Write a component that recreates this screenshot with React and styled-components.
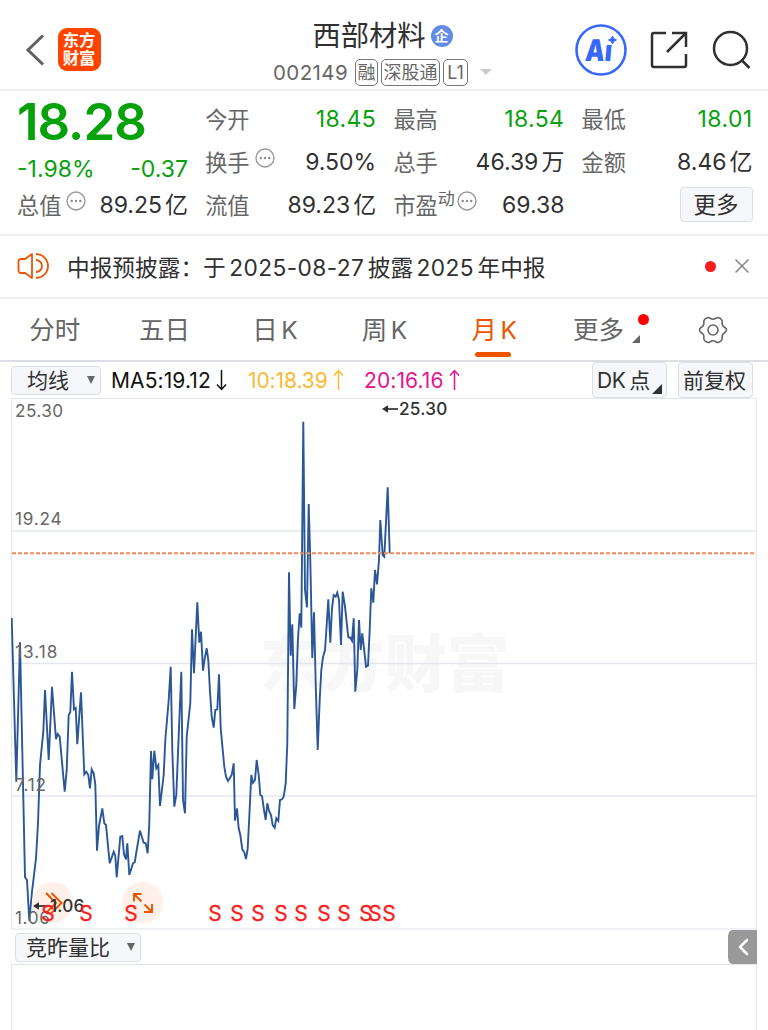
import React from "react";
import styled, {createGlobalStyle} from "styled-components";

const GlobalStyle = createGlobalStyle`
  * {
    box-sizing: border-box;
  }

  body {
    margin: 0;
    background: #fff;
    overflow: hidden;
    font-family: Inter, "Noto Sans CJK SC", sans-serif;
    color: #303030;
  }

  button {
    font-family: inherit;
    color: inherit;
    padding: 0;
  }
`;

const Page = styled.div`
  width: 768px;
  height: 1030px;
  overflow: hidden;
  display: flex;
  flex-direction: column;
  white-space: nowrap;
`;

const Header = styled.header`
  height: 91px;
  flex: none;
  border-bottom: 2px solid #efefef;
  display: grid;
  grid-template-columns: 230px 1fr 230px;
  padding: 0 17px 0 24px;
`;

const HeaderLeft = styled.div`
  display: flex;
  align-items: center;
  gap: 11.5px;
  padding-top: 10px;
`;

const Logo = styled.div`
  width: 43px;
  height: 43px;
  border-radius: 9px;
  background: #ff4400;
  color: #fff;
  font-size: 16.3px;
  line-height: 18px;
  font-weight: 700;
  text-align: center;
  padding-top: 3px;
`;

const HeaderTitle = styled.div`
  display: flex;
  flex-direction: column;
  align-items: center;
  padding: 16px 10px 0 0;
`;

const StockName = styled.div`
  display: flex;
  align-items: center;
  gap: 5px;
  height: 40px;
  font-size: 28.3px;
  line-height: 40px;
`;

const CompanyBadge = styled.span`
  width: 22px;
  height: 22px;
  border-radius: 50%;
  background: #628ce6;
  color: #fff;
  font-size: 14px;
  font-weight: 700;
  line-height: 21px;
  text-align: center;
`;

const CodeRow = styled.div`
  display: flex;
  align-items: center;
  gap: 3px;
  height: 32px;
  font-size: 20.5px;
  color: #666;
`;

const StockCode = styled.span`
  letter-spacing: 0.4px;
  margin-right: 4px;
`;

const Tag = styled.span`
  height: 27px;
  width: ${(props) => props.$width}px;
  border: 1px solid #777;
  border-radius: 5px;
  font-size: 18px;
  line-height: 25px;
  display: flex;
  justify-content: center;
`;

const Caret = styled.span`
  border: ${(props) => props.$size}px solid transparent;
  border-top: ${(props) => props.$height}px solid ${(props) => props.$color};
  border-bottom: 0;
  margin-left: ${(props) => props.$gap || 0}px;
`;

const HeaderRight = styled.div`
  display: flex;
  align-items: center;
  justify-content: flex-end;
  padding-top: 10px;
  gap: 23px;
`;

const AiMark = styled.text`
  font-family: Inter, sans-serif;
  font-size: 30px;
  font-weight: 900;
  fill: #3768fa;
`;

const Quote = styled.section`
  height: 145px;
  flex: none;
  border-bottom: 2px solid #efefef;
  padding: 7px 15px 0 17px;
  display: grid;
  grid-template-columns: repeat(4, 171px);
  grid-template-rows: repeat(3, 43px);
  column-gap: 17.2px;
`;

const PriceBlock = styled.div`
  grid-row: span 2;
  color: #07a10b;
`;

const Price = styled.div`
  font-size: 51px;
  line-height: 48px;
  font-weight: 600;
  letter-spacing: -1px;
`;

const Change = styled.div`
  display: flex;
  justify-content: space-between;
  font-size: 23px;
  line-height: 30px;
  margin-top: 8px;
`;

const Cell = styled.div`
  display: flex;
  align-items: center;
  justify-content: space-between;
  font-size: 23px;
  line-height: 43px;
`;

const Label = styled.span`
  display: flex;
  align-items: center;
  color: #666;
  font-size: 22.2px;

  svg {
    margin: -10px 0 0 5px;
  }

  sup {
    font-size: 17px;
    line-height: 17px;
    margin-top: -13px;
  }

  sup + svg {
    margin-left: 2px;
  }
`;

const Value = styled.span`
  color: ${(props) => (props.$down ? "#07a10b" : "#303030")};
  letter-spacing: ${(props) => (props.$down ? 0.4 : 0)}px;
`;

const Unit = styled.span`
  margin-left: 3px;
  font-size: 23px;
`;

const MoreButton = styled.button`
  width: 73px;
  height: 35px;
  margin: -3px 0 0 auto;
  border: 1px solid #dcdfe4;
  border-radius: 4px;
  background: #f6f7fa;
  font-size: 22.5px;
  line-height: 33px;
`;

const Notice = styled.section`
  height: 63px;
  flex: none;
  border-bottom: 2px solid #efefef;
  display: flex;
  align-items: center;
  padding: 0 18px 1px 17px;
  font-size: 22.7px;
`;

const NoticeText = styled.span`
  margin-left: 18px;
  flex: 1;

  b {
    font-weight: 400;
    letter-spacing: 0.4px;
    margin: 0 3.5px;
  }
`;

const Dot = styled.span`
  width: 11px;
  height: 11px;
  border-radius: 50%;
  background: #fa1d1d;
`;

const CloseIcon = styled.svg`
  margin-left: 18px;
`;

const Tabs = styled.nav`
  height: 63px;
  flex: none;
  border-bottom: 2px solid #dcdee4;
  display: grid;
  grid-template-columns: repeat(5, 109.6px) 101px 1fr;
`;

const Tab = styled.div`
  display: flex;
  flex-direction: column;
  align-items: center;
  justify-content: flex-end;
  position: relative;
  font-size: 25.5px;
  line-height: 36px;
  padding-bottom: 12px;
  color: ${(props) => (props.$active ? "#ee5400" : "#666")};

  &::after {
    content: "";
    display: ${(props) => (props.$active ? "block" : "none")};
    position: absolute;
    bottom: 3px;
    width: 36px;
    height: 5px;
    border-radius: 3px;
    background: #ee5400;
  }
`;

const TabLabel = styled.span`
  b {
    font-size: 24.5px;
    font-weight: 400;
    margin-left: 3.5px;
    margin-right: -2px;
  }
`;

const TabDot = styled(Dot)`
  position: absolute;
  top: 15px;
  right: 0;
  background: #ff0000;
`;

const Corner = styled.span`
  position: absolute;
  right: ${(props) => props.$right}px;
  bottom: ${(props) => props.$bottom}px;
  border-left: ${(props) => props.$size}px solid transparent;
  border-bottom: ${(props) => props.$size}px solid ${(props) => props.$color};
`;

const Settings = styled.div`
  display: flex;
  align-items: center;
  padding-left: 49px;
`;

const Toolbar = styled.div`
  height: 36px;
  flex: none;
  display: flex;
  align-items: center;
  padding: 0 15px 0 11px;
  font-size: 21px;
`;

const Picker = styled.button`
  display: flex;
  align-items: center;
  justify-content: space-between;
  flex: none;
  position: relative;
  width: ${(props) => props.$width}px;
  height: ${(props) => props.$height}px;
  padding: ${(props) => props.$pad || "0 4px"};
  margin-left: ${(props) => props.$gap || 0}px;
  border: 1px solid #dcdfe4;
  border-radius: 4px;
  background: #f6f7fa;
  font-size: 21px;
  line-height: 27px;

  b {
    font-weight: 400;
    letter-spacing: -0.5px;
    margin-right: 4px;
  }
`;

const Averages = styled.div`
  display: flex;
  flex: 1;
  margin-left: 10px;
`;

const Average = styled.span`
  display: flex;
  align-items: center;
  gap: 5px;
  width: ${(props) => props.$width}px;
  color: ${(props) => props.$color};
  letter-spacing: ${(props) => props.$spacing}px;
`;

const Chart = styled.section`
  position: relative;
  height: 532px;
  flex: none;
  margin: 0 11px;
  border: 1px solid #e3e5ec;
  border-bottom: 2px solid #f0f1f4;
`;

const Watermark = styled.div`
  position: absolute;
  left: 248px;
  top: 221px;
  font-size: 62.3px;
  line-height: 90px;
  font-weight: 900;
  color: #f7f7f7;
`;

const Plot = styled.svg`
  position: absolute;
  left: -1px;
  top: -1px;
`;

const AxisLabel = styled.span`
  position: absolute;
  left: 3px;
  top: ${(props) => props.$top}px;
  font-size: 17.2px;
  line-height: 20px;
  letter-spacing: ${(props) => props.$spacing}px;
  color: #666;
`;

const Extreme = styled.span`
  position: absolute;
  left: ${(props) => props.$left}px;
  top: ${(props) => props.$top}px;
  display: flex;
  align-items: center;
  font-size: 17.2px;
  line-height: 20px;
  font-weight: 500;
  letter-spacing: 0.2px;
`;

const RoundButton = styled.span`
  position: absolute;
  left: ${(props) => props.$left}px;
  top: 483px;
  width: 41px;
  height: 41px;
  border-radius: 50%;
  background: #fff1ea;
  display: flex;
  align-items: center;
  justify-content: center;
`;

const Signal = styled.span`
  position: absolute;
  top: 503px;
  left: ${(props) => props.$left}px;
  width: 20px;
  text-align: center;
  font-size: 21px;
  line-height: 24px;
  color: #fa1d1d;
  -webkit-text-stroke: 0.3px #fa1d1d;
`;

const IndicatorBar = styled.div`
  height: 34px;
  flex: none;
  display: flex;
  align-items: center;
  justify-content: space-between;
  margin: 0 11px;
  padding-left: 4px;
`;

const Collapse = styled.button`
  width: 29px;
  height: 36px;
  border: 0;
  border-radius: 7px 0 0 7px;
  background: #999;
  display: flex;
  align-items: center;
  justify-content: center;
`;

const SubChart = styled.section`
  flex: 1;
  margin: 0 11px;
  border: 1px solid #e3e5ec;
  border-bottom: 0;
`;

const quotes = [
    {label: "今开", value: "18.45", down: true},
    {label: "最高", value: "18.54", down: true},
    {label: "最低", value: "18.01", down: true},
    {label: "换手", value: "9.50%", info: true},
    {label: "总手", value: "46.39", unit: "万"},
    {label: "金额", value: "8.46", unit: "亿"},
    {label: "总值", value: "89.25", unit: "亿", info: true},
    {label: "流值", value: "89.23", unit: "亿"},
    {label: "市盈", sup: "动", value: "69.38", info: true},
];

const tabs = [
    {name: "分时"},
    {name: "五日"},
    {name: "日", k: true},
    {name: "周", k: true},
    {name: "月", k: true, active: true},
];

const axis = [
    {text: "25.30", top: 2, spacing: 0.4},
    {text: "19.24", top: 110, spacing: 0.8},
    {text: "13.18", top: 243, spacing: 1},
    {text: "7.12", top: 376, spacing: 0.8},
    {text: "1.06", top: 509, spacing: 0.6},
];

const signals = [48, 86, 131, 215, 237, 258, 281, 301, 324, 344, 366, 375, 389];

const prices = [
    "11.7,618 16.3,781.7 20,642.3 25,877.3 27,880 29.3,920.7 32,891.7 36,858.3 38,823.3 40,765",
    "43.3,731.7 45,690 48.7,760 52,686.7 56,739.3 57.7,734 59.7,736.7 64.7,791.7 66.7,770 68.7,715",
    "70.3,712 72,671.7 74,709.3 75.7,708 77.3,744.3 81,692.3 84.3,774.3 86.3,771.7 88.3,775 90,788.3",
    "91.7,769.3 93.7,773.3 95.3,784.3 97,850.7 99,826 102.3,808.3 104.3,823.3 106,825 109.7,863.3",
    "113.7,851.7 115.3,855.7 116.7,877.3 120.3,836.7 122.3,836 124,854.3 126,859.3 127.3,843.3 129.3,875",
    "133,863.3 134.7,862.3 136.7,850 140,830.7 143.7,842.7 145.7,843.3 147.7,853.3 149.3,823.3 151,751",
    "152.3,779.3 154.3,750.7 156.3,768.3 158.3,765 160,806 163.7,775 165.3,740 168.7,700 170.7,666.7",
    "172.3,750 174.3,806.7 176.3,795 181.3,671.7 183,800 185,813.3 186.7,736.7 190.3,703.3 192,629.3",
    "194,673.3 197.3,602.3 199.3,642.7 201,631.7 203,670.7 204.7,658.3 206.7,648.3 208.3,660 210,691.7",
    "211.7,716.7 213.7,727.7 215.3,710 217.3,709.3 219,674.3 220.7,728.3 224.3,766.7 226,776.7 228,781",
    "230,777.7 231.7,775 233.7,763.3 235,820.7 237,808.3 238.7,828.3 240.3,835 242.3,849.3 244.3,852.3",
    "246,859 247.7,848.3 249.3,816.7 251.3,775 253,782.7 255,780 256.7,760 258.7,775 260.3,795 262,796",
    "264,810 265.7,820 267.3,803.3 269,810.7 271,815 272.7,825 274.7,827.7 276.3,818.3 278.3,821 280,800",
    "282,799.3 283.7,796.7 285.7,783.3 287.3,743.3 289,572.3 290.7,655.7 292.3,624.3 294.3,709 296.3,685",
    "298,638.3 299.7,613.3 301.3,627.7 303.3,421.7 305,590 307,607.3 308.7,504 310.3,560 312.3,658",
    "314,612.3 315.7,683.3 317.7,750 319.7,700 321.3,670 323,657.3 325,650 326.7,625 328.3,599.3",
    "330.3,642.7 332,608.3 333.7,595 335.7,596.7 337.3,592.7 339,600 341,645 342.7,591.7 345,606.7",
    "348.3,637.3 350.3,637.7 352,640.7 353.7,618.3 355.3,691.7 357.3,670 359,620 360.7,650 362.3,633.3",
    "364,648.3 366,666.7 368,665.7 369.7,630 371.3,588.3 373.3,602.7 375,570 377,584.3 379,560 380.3,520",
    "382.7,555 384.3,556.7 387.7,487.3 389.7,553.3",
].join(" ");

const InfoIcon = () => (
    <svg width="20" height="20" viewBox="0 0 20 20" fill="none">
        <circle cx="10" cy="10" r="9" stroke="#999" strokeWidth="1.4"/>
        <g fill="#888">
            <circle cx="5.7" cy="10" r="1.2"/>
            <circle cx="10" cy="10" r="1.2"/>
            <circle cx="14.3" cy="10" r="1.2"/>
        </g>
    </svg>
);

const TrendArrow = ({down}) => (
    <svg width="11" height="22" viewBox="0 0 11 22" fill="none" stroke="currentColor" strokeWidth="1.5">
        <path d={down ? "M5.5 1v19M1 15.5l4.5 5 4.5-5" : "M5.5 21V2M1 6.5l4.5-5 4.5 5"}/>
    </svg>
);

const LeftArrow = () => (
    <svg width="17" height="10" viewBox="0 0 17 10">
        <path d="M4 5h12" stroke="#303030" strokeWidth="1.7"/>
        <path d="M0 5l6-3.8v7.6z" fill="#303030"/>
    </svg>
);

const QuoteCell = ({item}) => (
    <Cell>
        <Label>
            {item.label}
            {item.sup ? <sup>{item.sup}</sup> : null}
            {item.info ? <InfoIcon/> : null}
        </Label>
        <Value $down={item.down}>
            {item.value}
            {item.unit ? <Unit>{item.unit}</Unit> : null}
        </Value>
    </Cell>
);

const StockHeader = () => (
    <Header>
        <HeaderLeft>
            <svg width="22" height="32" viewBox="0 0 22 32" fill="none">
                <path d="M19 1.5L4 16l15 14.500" stroke="#606060" strokeWidth="3"/>
            </svg>
            <Logo>东方<br/>财富</Logo>
        </HeaderLeft>
        <HeaderTitle>
            <StockName>西部材料<CompanyBadge>企</CompanyBadge></StockName>
            <CodeRow>
                <StockCode>002149</StockCode>
                <Tag $width={23}>融</Tag>
                <Tag $width={59}>深股通</Tag>
                <Tag $width={25}>L1</Tag>
                <Caret $size={6} $height={6} $color="#ccc" $gap={9}/>
            </CodeRow>
        </HeaderTitle>
        <HeaderRight>
            <svg width="52" height="52" viewBox="0 0 52 52" fill="none">
                <circle cx="26" cy="26" r="24.5" stroke="#3768fa" strokeWidth="2.600"/>
                <AiMark transform="translate(9.500 36.500) skewX(-5) scale(0.820 1)">Ai</AiMark>
                {/* the dot of the i is a four-pointed star */}
                <path d="M31 10h12v11H31z" fill="#fff"/>
                <path
                    d="M37.500 12l1.300 2.700 2.700 1.300-2.700 1.300-1.300 2.700-1.300-2.700-2.700-1.300 2.700-1.300z"
                    fill="#3768fa"
                    stroke="#3768fa"
                    strokeLinejoin="round"
                />
            </svg>
            <svg width="38" height="38" viewBox="0 0 38 38" fill="none" stroke="#303030" strokeWidth="2.500">
                <path d="M16 2H4a2 2 0 0 0-2 2v30a2 2 0 0 0 2 2h30a2 2 0 0 0 2-2V23M22 2h14v14M36 2L17 21"/>
            </svg>
            <svg width="40" height="40" viewBox="0 0 40 40" fill="none" stroke="#303030" strokeWidth="2.500">
                <circle cx="19.5" cy="18.500" r="16.500"/>
                <path d="M30.5 30l8 8"/>
            </svg>
        </HeaderRight>
    </Header>
);

const PriceChart = () => (
    <Chart>
        <Watermark>东方财富</Watermark>
        <Plot width="746" height="532" viewBox="11 398 746 532" fill="none">
            <path d="M12 531h744M12 663.500h744M12 796h744" stroke="#e4e8ee" strokeWidth="1.600"/>
            <polyline points={prices} stroke="#2b5797" strokeWidth="1.900" strokeLinejoin="miter"/>
            <path d="M12 553.300h744" stroke="#ee8a5b" strokeWidth="1.900" strokeDasharray="4 2"/>
        </Plot>
        <RoundButton $left={20}>
            <svg width="20" height="22" viewBox="0 0 20 22" fill="none" stroke="#ee5400" strokeWidth="2">
                <path d="M3 1l10 10-10 10M8.500 1l10 10-10 10"/>
            </svg>
        </RoundButton>
        <RoundButton $left={110}>
            <svg width="24" height="24" viewBox="0 0 24 24" fill="none" stroke="#ee5400" strokeWidth="1.900">
                <path d="M10.500 3H3v7.500M3 3l7.500 7.500M13 21h8v-8M21 21l-7.500-7.500"/>
            </svg>
        </RoundButton>
        {axis.map((item) => (
            <AxisLabel key={item.text} $top={item.top} $spacing={item.spacing}>{item.text}</AxisLabel>
        ))}
        <Extreme $left={370} $top={0}><LeftArrow/>25.30</Extreme>
        <Extreme $left={21} $top={497}><LeftArrow/>1.06</Extreme>
        {signals.map((x) => (
            <Signal key={x} $left={x - 22}>S</Signal>
        ))}
    </Chart>
);

const App = () => (
    <>
        <GlobalStyle/>
        <Page>
            <StockHeader/>
            <Quote>
                <PriceBlock>
                    <Price>18.28</Price>
                    <Change><span>-1.98%</span><span>-0.37</span></Change>
                </PriceBlock>
                {quotes.map((item) => <QuoteCell key={item.label} item={item}/>)}
                <Cell><MoreButton>更多</MoreButton></Cell>
            </Quote>
            <Notice>
                <svg width="32" height="28" viewBox="0 0 32 28" fill="none" stroke="#ee5400" strokeWidth="1.800">
                    <path d="M15 2v24l-7-5H4a2.500 2.500 0 0 1-2.500-2.500v-9A2.500 2.500 0 0 1 4 7h4z" strokeLinejoin="round"/>
                    <path d="M19 8a6 6 0 0 1 0 12M19 2a12 12 0 0 1 0 24"/>
                </svg>
                <NoticeText>
                    中报预披露：于<b>2025-08-27</b>披露<b>2025</b>年中报
                </NoticeText>
                <Dot/>
                <CloseIcon width="16" height="16" viewBox="0 0 16 16" stroke="#888" strokeWidth="1.600">
                    <path d="M1.500 1.500l13 13M14.500 1.500l-13 13"/>
                </CloseIcon>
            </Notice>
            <Tabs>
                {tabs.map((tab) => (
                    <Tab key={tab.name} $active={tab.active}>
                        <TabLabel>{tab.name}{tab.k ? <b>K</b> : null}</TabLabel>
                    </Tab>
                ))}
                <Tab>
                    <TabLabel>更多</TabLabel>
                    <TabDot/>
                    <Corner $right={9} $bottom={17} $size={8} $color="#666"/>
                </Tab>
                <Settings>
                    <svg width="30" height="30" viewBox="0 0 30 30" fill="none" stroke="#666" strokeWidth="1.600">
                        <path
                            d="M10 2.500c2 0 2.500 1.700 5 1.700s3-1.700 5-1.700c2 .5 3.500 1.500 4 3 .5 2-.5 3 .7 5s3.800 2 3.800 4.500-2.600 2.500-3.800 4.500-.2 3-.7 5c-.5 1.500-2 2.500-4 3-2 0-2.500-1.700-5-1.700s-3 1.700-5 1.700c-2-.5-3.500-1.500-4-3-.5-2 .5-3-.7-5S1.500 17.500 1.500 15s2.600-2.500 3.800-4.500.2-3 .7-5c.5-1.500 2-2.500 4-3z"/>
                        <circle cx="15" cy="15" r="5"/>
                    </svg>
                </Settings>
            </Tabs>
            <Toolbar>
                <Picker $width={90} $height={29} $pad="0 5px 0 15px">
                    均线<Caret $size={4.5} $height={8} $color="#666"/>
                </Picker>
                <Averages>
                    <Average $width={137} $color="#111" $spacing={0.1}>MA5:19.12<TrendArrow down/></Average>
                    <Average $width={116} $color="#fdb833" $spacing={-0.1}>10:18.39<TrendArrow/></Average>
                    <Average $width={100} $color="#e5138c" $spacing={0.1}>20:16.16<TrendArrow/></Average>
                </Averages>
                <Picker $width={75} $height={36}>
                    <span><b>DK</b>点</span><Corner $right={4} $bottom={3} $size={10} $color="#303030"/>
                </Picker>
                <Picker $width={75} $height={36} $gap={11}>前复权</Picker>
            </Toolbar>
            <PriceChart/>
            <IndicatorBar>
                <Picker $width={126} $height={29} $pad="0 5px 0 10px">
                    竞昨量比<Caret $size={4.5} $height={8} $color="#666"/>
                </Picker>
                <Collapse>
                    <svg width="12" height="18" viewBox="0 0 12 18" fill="none" stroke="#fff" strokeWidth="2.500">
                        <path d="M10 2L3 9l7 7" strokeLinecap="round" strokeLinejoin="round"/>
                    </svg>
                </Collapse>
            </IndicatorBar>
            <SubChart/>
        </Page>
    </>
);

export default App;
